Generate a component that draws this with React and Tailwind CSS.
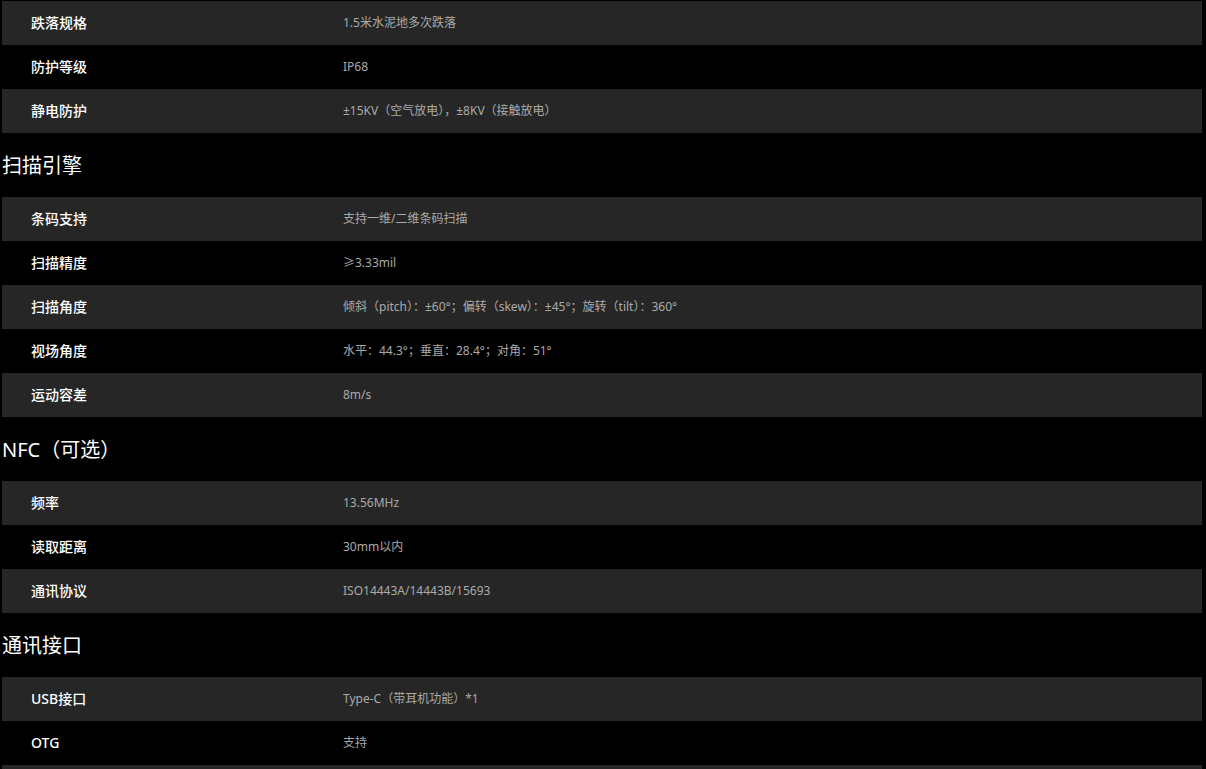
const sections = [
  {
    title: null,
    rows: [
      ["跌落规格", "1.5米水泥地多次跌落"],
      ["防护等级", "IP68"],
      ["静电防护", "±15KV（空气放电），±8KV（接触放电）"],
    ],
  },
  {
    title: "扫描引擎",
    rows: [
      ["条码支持", "支持一维/二维条码扫描"],
      ["扫描精度", "≥3.33mil"],
      ["扫描角度", "倾斜（pitch）：±60°；偏转（skew）：±45°；旋转（tilt）：360°"],
      ["视场角度", "水平：44.3°；垂直：28.4°；对角：51°"],
      ["运动容差", "8m/s"],
    ],
  },
  {
    title: "NFC（可选）",
    rows: [
      ["频率", "13.56MHz"],
      ["读取距离", "30mm以内"],
      ["通讯协议", "ISO14443A/14443B/15693"],
    ],
  },
  {
    title: "通讯接口",
    rows: [
      ["USB接口", "Type-C（带耳机功能）*1"],
      ["OTG", "支持"],
      ["", ""],
    ],
  },
];

function SpecRow({ label, value, striped }) {
  return (
    <div className={"flex h-[44px] items-center pb-[1px] " + (striped ? "bg-[#262626]" : "bg-black")}>
      <div className="w-[312px] shrink-0 pl-[29px] text-[14px] font-medium text-white">{label}</div>
      <div className="pl-[29px] text-[12px] text-[#aaaaaa]">{value}</div>
    </div>
  );
}

export default function App() {
  return (
    <div
      className="min-h-screen overflow-hidden bg-black pl-[2px] pr-[4px] pt-[1px]"
      style={{ fontFamily: '"Noto Sans", "Noto Sans CJK SC", sans-serif' }}
    >
      {sections.map((s, i) => (
        <div key={i}>
          {s.title && (
            <div className="flex h-[64px] items-center pt-[1px] text-[20px] text-white">{s.title}</div>
          )}
          {s.rows.map((r, j) => (
            <SpecRow key={j} label={r[0]} value={r[1]} striped={j % 2 === 0} />
          ))}
        </div>
      ))}
    </div>
  );
}
